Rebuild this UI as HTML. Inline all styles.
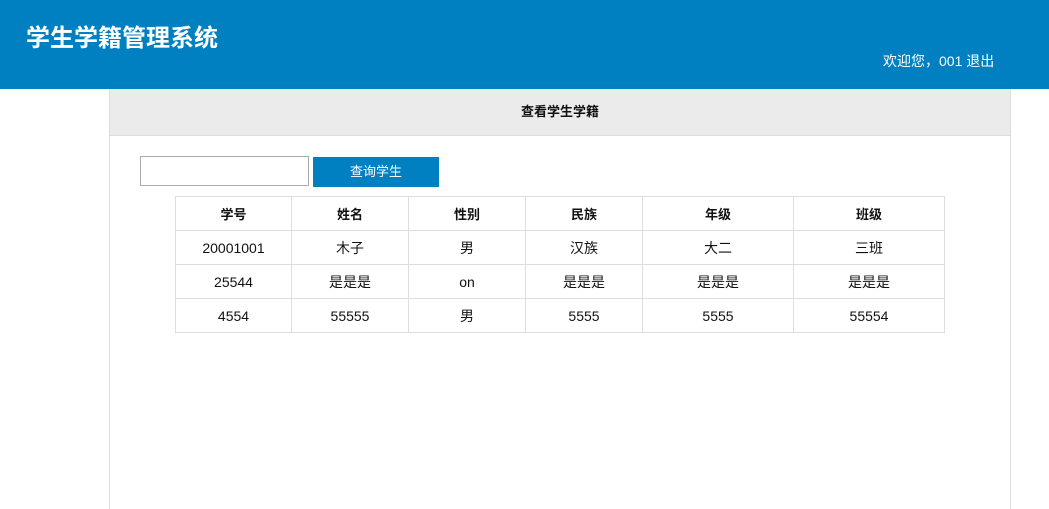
<!DOCTYPE html><html><head><meta charset="utf-8"><style>
body{margin:0;width:1049px;height:504px;overflow:hidden;background:#fff;font-family:"Liberation Sans","Noto Sans CJK SC",sans-serif;position:relative}
.hd{position:absolute;left:0;top:0;width:1049px;height:89px;background:#0080c0;color:#fff}
.t{position:absolute;left:26px;top:18px;font-size:24px;font-weight:bold}
.w{position:absolute;left:883px;top:51px;font-size:14px}
.p{position:absolute;left:109px;top:89px;width:900px;height:420px;border-left:1px solid #ddd;border-right:1px solid #ddd}
.ph{height:46px;background:#ebebeb;border-bottom:1px solid #ddd;text-align:center;line-height:46px;font-size:13px;font-weight:bold;color:#111}
.in{position:absolute;left:140px;top:156px;width:167px;height:28px;border:1px solid #aaa;box-sizing:content-box}
.bt{position:absolute;left:313px;top:157px;width:126px;height:30px;background:#0080c0;color:#fff;font-size:13px;text-align:center;line-height:30px}
table{position:absolute;left:175px;top:196px;border-collapse:collapse;font-size:14px;color:#111}
td{border:1px solid #ddd;height:33px;text-align:center;padding:0}
tr:first-child td{font-weight:bold;font-size:13px}
</style></head><body>
<div class="hd"><div class="t">学生学籍管理系统</div><div class="w">欢迎您，001 退出</div></div>
<div class="p"><div class="ph">查看学生学籍</div></div>
<div class="in"></div><div class="bt">查询学生</div>
<table><colgroup><col style="width:116px"><col style="width:117px"><col style="width:117px"><col style="width:117px"><col style="width:151px"><col style="width:151px"></colgroup>
<tr><td>学号</td><td>姓名</td><td>性别</td><td>民族</td><td>年级</td><td>班级</td></tr>
<tr><td>20001001</td><td>木子</td><td>男</td><td>汉族</td><td>大二</td><td>三班</td></tr>
<tr><td>25544</td><td>是是是</td><td>on</td><td>是是是</td><td>是是是</td><td>是是是</td></tr>
<tr><td>4554</td><td>55555</td><td>男</td><td>5555</td><td>5555</td><td>55554</td></tr>
</table>
</body></html>
